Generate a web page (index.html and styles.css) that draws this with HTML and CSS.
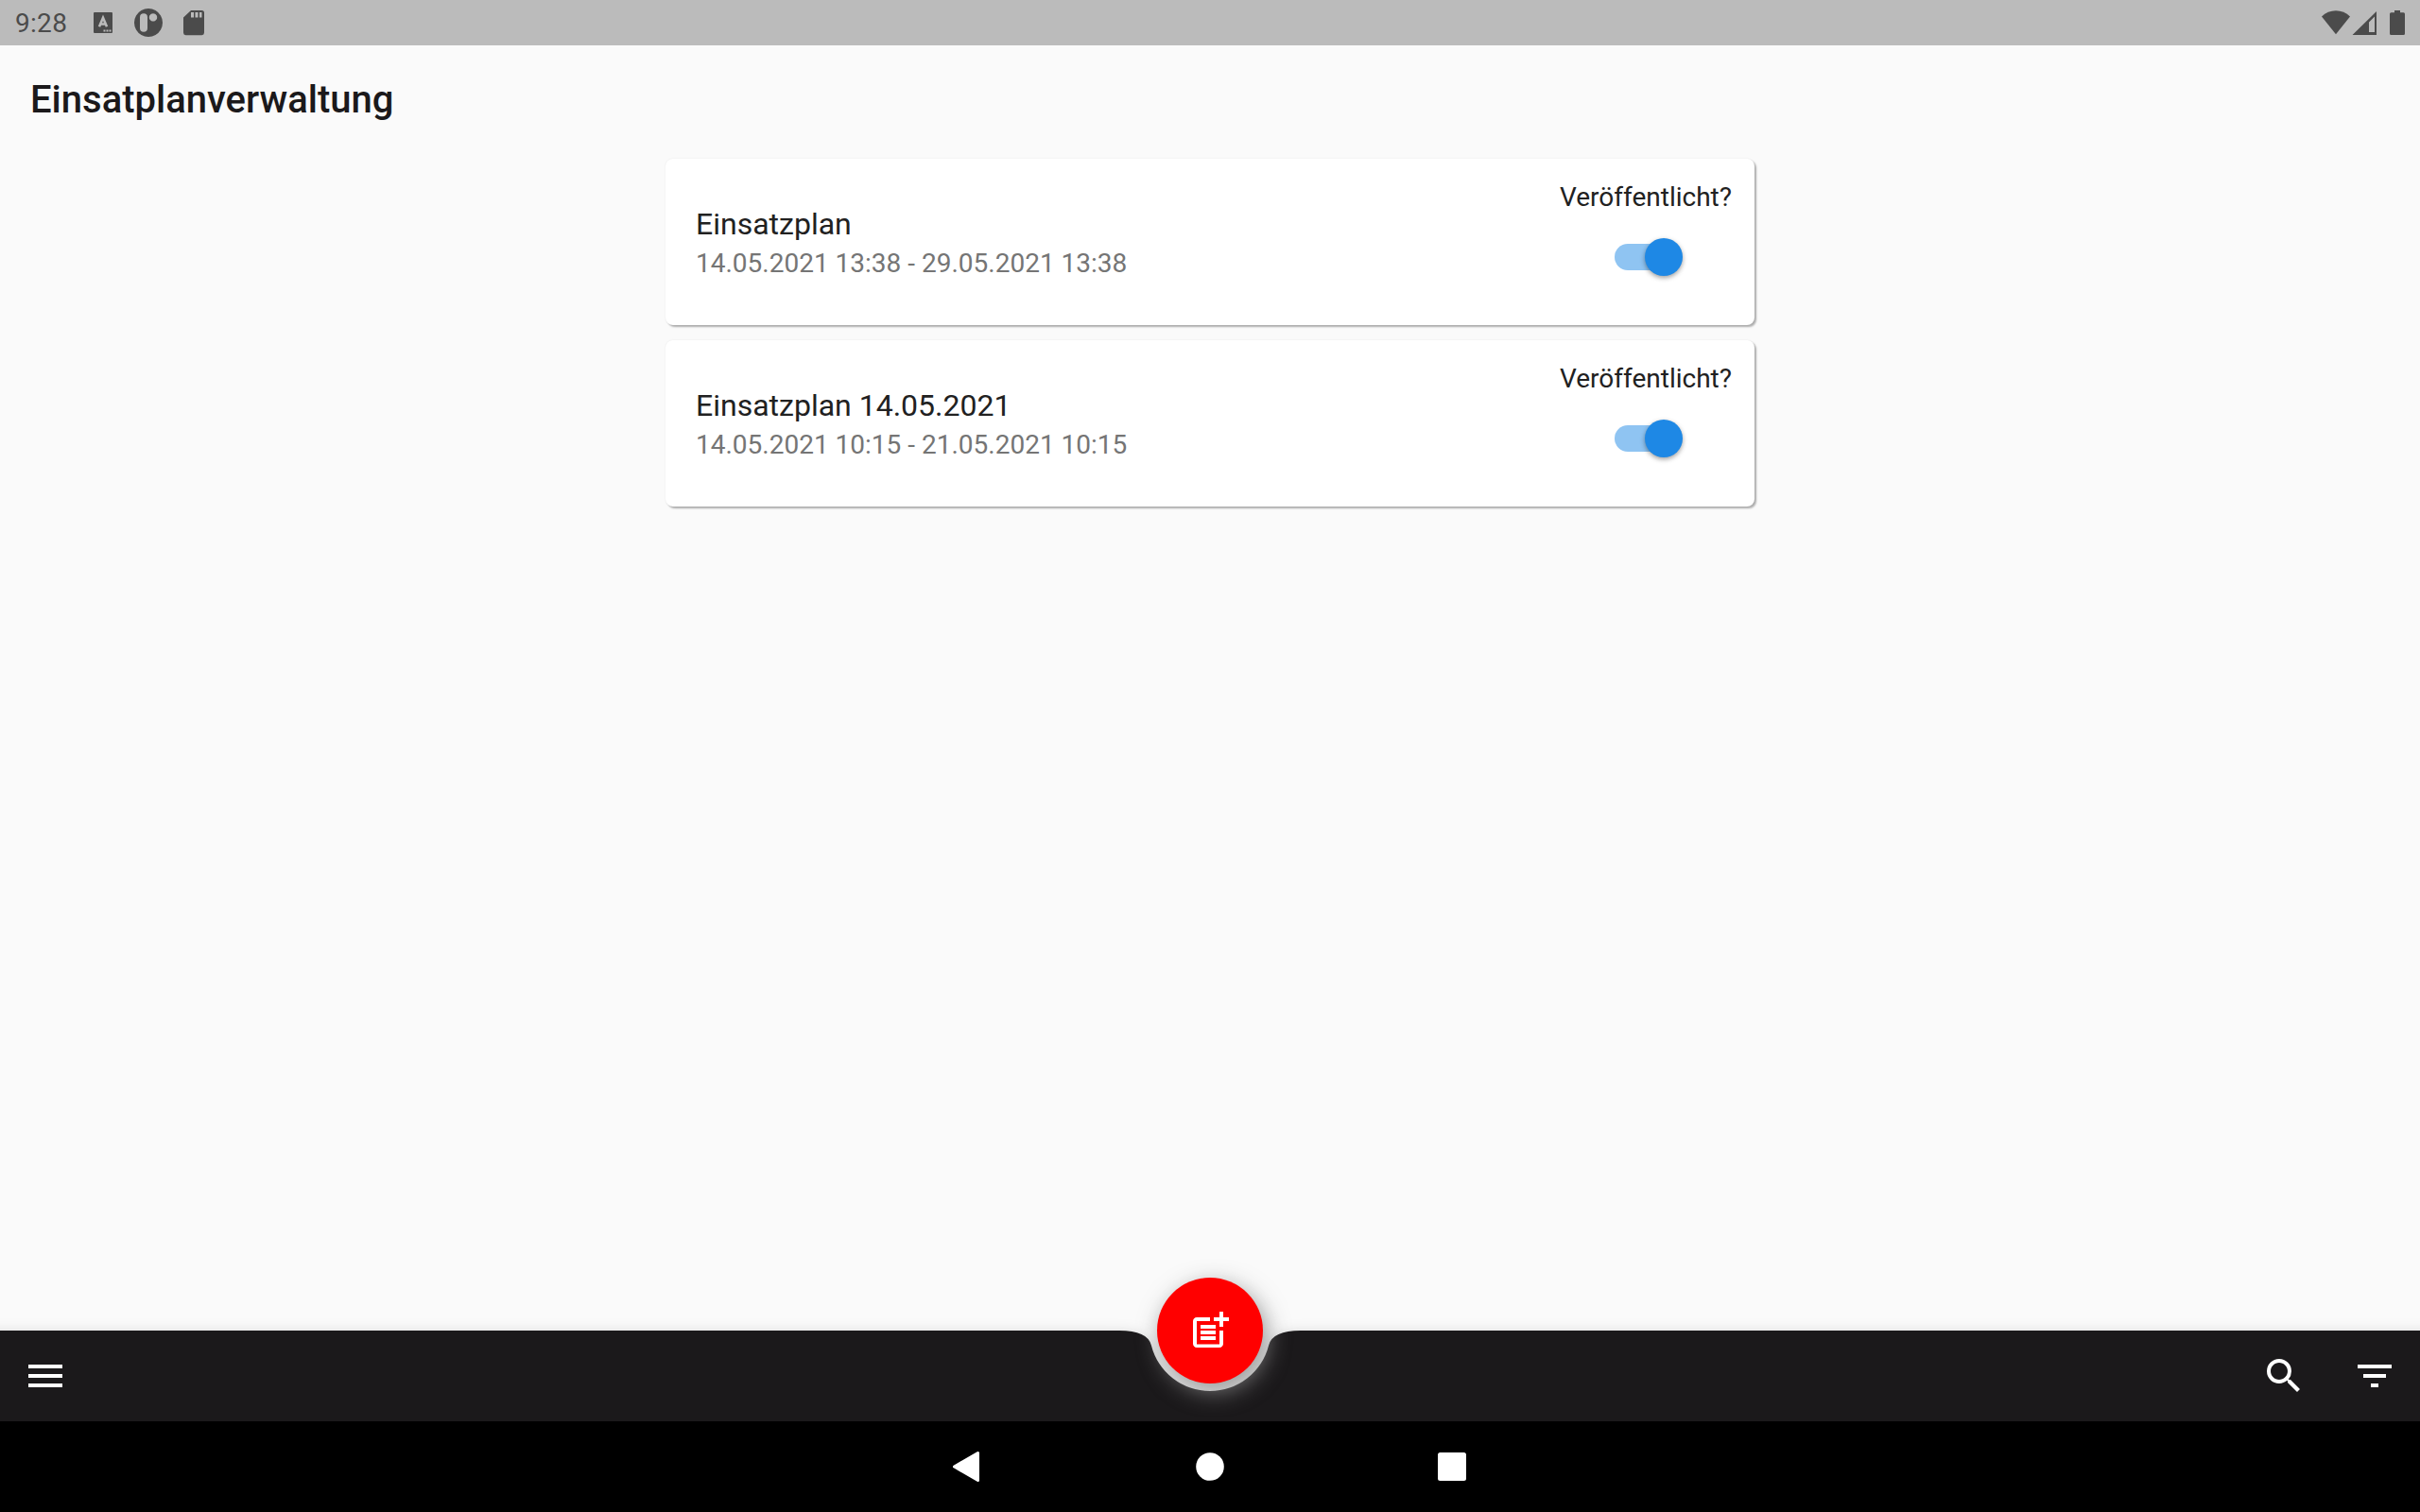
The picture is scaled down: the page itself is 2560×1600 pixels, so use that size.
FILE: index.html
```
<!DOCTYPE html>
<html lang="de">
<head>
<meta charset="utf-8">
<title>Einsatplanverwaltung</title>
<link rel="stylesheet" href="styles.css">
</head>
<body>
<div class="status-bar">
  <span class="clock">9:28</span>
  <svg class="status-icons" width="118" height="48" viewBox="0 0 118 48">
    <path d="M1 13h18q1 0 1 1v20q0 1-1 1H1q-1 0-1-1V14q0-1 1-1z"/>
    <path class="cutout-line" d="M6 28.200L10 18.800L14 28.200M7.500 25.500h5"/>
    <path class="cutout" d="M10.500 31.500v2h2v-2zm3 0v2h2v-2zm3 0v2h2v-2z"/>
    <path fill-rule="evenodd" d="M58 9a15 15 0 1 0 .01 0zM53 14.200a4 4 0 0 1 4 4v11.600a4 4 0 0 1-8 0V18.200a4 4 0 0 1 4-4zM63 14.200a4.200 4.200 0 1 1-.01 0z"/>
    <path fill-rule="evenodd" d="M103 11h11.500a2.500 2.500 0 0 1 2.500 2.500v21a2.800 2.800 0 0 1-2.500 2.800H97.500a2.800 2.800 0 0 1-2.500-2.800V18.500zM103 13v5.500h3V13zm4.500 0v5.500h3V13zm4.500 0v5.500h2.500V13z"/>
  </svg>
  <svg class="signal-icons" width="90" height="48" viewBox="0 0 90 48">
    <path d="M0 17.500C8 9.300 22 9.300 30 17.500L15 36.300z"/>
    <path fill-rule="evenodd" d="M58 12v25H32.500zM56 17.500l-6 6V34h6z"/>
    <path d="M77 11h6v2.300h3.500q1.500 0 1.500 1.500V35.500q0 1.500-1.500 1.500h-13q-1.500 0-1.500-1.500V14.800q0-1.500 1.500-1.500H77z"/>
  </svg>
</div>
<header class="app-bar"><h1>Einsatplanverwaltung</h1></header>
<main class="plans">
  <section class="card">
    <div class="info">
      <div class="name">Einsatzplan</div>
      <div class="period">14.05.2021 13:38 - 29.05.2021 13:38</div>
    </div>
    <div class="publish">
      <span class="label">Veröffentlicht?</span>
      <span class="switch"><span class="thumb"></span></span>
    </div>
  </section>
  <section class="card">
    <div class="info">
      <div class="name">Einsatzplan 14.05.2021</div>
      <div class="period">14.05.2021 10:15 - 21.05.2021 10:15</div>
    </div>
    <div class="publish">
      <span class="label">Veröffentlicht?</span>
      <span class="switch"><span class="thumb"></span></span>
    </div>
  </section>
</main>
<footer class="bottom-bar">
  <svg class="bar-shape" width="2560" height="96" viewBox="0 0 2560 96">
    <path d="M-40 0H1184Q1214 0 1217.940 15.640A64 64 0 0 0 1342.060 15.640Q1346 0 1376 0H2600V96H-40z"/>
  </svg>
  <svg class="icon" width="48" height="48" viewBox="0 0 24 24"><path d="M3 18h18v-2H3v2zm0-5h18v-2H3v2zm0-7v2h18V6H3z"/></svg>
  <div class="actions">
    <svg class="icon" width="48" height="48" viewBox="0 0 24 24"><path d="M15.500 14h-.79l-.28-.27A6.471 6.471 0 0 0 16 9.500 6.500 6.500 0 1 0 9.500 16c1.610 0 3.090-.59 4.230-1.570l.27.28v.79l5 4.990L20.490 19l-4.990-5zm-6 0C7.010 14 5 11.990 5 9.500S7.010 5 9.500 5 14 7.010 14 9.500 11.990 14 9.500 14z"/></svg>
    <svg class="icon" width="48" height="48" viewBox="0 0 24 24"><path d="M10 18h4v-2h-4v2zM3 6v2h18V6H3zm3 7h12v-2H6v2z"/></svg>
  </div>
  <div class="fab">
    <svg class="icon" width="48" height="48" viewBox="0 0 24 24"><path d="M17 19.220H5V7h7V5H5c-1.100 0-2 .9-2 2v12c0 1.100.9 2 2 2h12c1.100 0 2-.9 2-2v-7h-2v7.220z"/><path d="M19 2h-2v3h-3c.01.010 0 2 0 2h3v2.990c.010.010 2 0 2 0V7h3V5h-3V2zM7 9h8v2H7zM7 12v2h8v-2h-3zM7 15h8v2H7z"/></svg>
  </div>
</footer>
<nav class="system-nav">
  <svg width="552" height="96" viewBox="0 0 552 96">
    <path d="M28.500 33.500v29L3.500 48z" stroke="#fff" stroke-width="3" stroke-linejoin="round"/>
    <circle cx="274" cy="48" r="14.800"/>
    <rect x="515" y="33" width="30" height="30" rx="2.500"/>
  </svg>
</nav>
</body>
</html>
```
FILE: styles.css
```
* { box-sizing: border-box; }
body {
  margin: 0;
  width: 2560px;
  height: 1600px;
  display: flex;
  flex-direction: column;
  overflow: hidden;
  background: #fafafa;
  color: #212121;
  font-family: Roboto, sans-serif;
}
svg { display: block; flex: none; }
.status-bar {
  height: 48px;
  flex: none;
  display: flex;
  align-items: center;
  padding: 0 16px;
  background: #bbb;
  color: #4b4b4b;
  fill: #4b4b4b;
}
.cutout { fill: #bbb; }
.cutout-line { fill: none; stroke: #bbb; stroke-width: 2.6; }
.clock { width: 83px; font-size: 28px; line-height: 48px; padding-top: 2px; letter-spacing: 0.3px; }
.signal-icons { margin-left: auto; margin-right: -2px; }
.app-bar { height: 112px; flex: none; padding: 0 32px; }
.app-bar h1 {
  margin: 0;
  font-size: 40px;
  line-height: 116px;
  font-weight: 500;
  color: #1b191b;
}
.plans {
  flex: 1;
  width: 1152px;
  margin: 0 auto;
  padding-top: 8px;
  display: flex;
  flex-direction: column;
  gap: 16px;
}
.card {
  height: 176px;
  display: flex;
  justify-content: space-between;
  padding: 0 24px 0 32px;
  background: #fff;
  border-radius: 8px;
  box-shadow: 2px 2px 2px rgba(0, 0, 0, 0.3), 0 0 2px rgba(0, 0, 0, 0.08);
}
.info { padding-top: 48px; }
.name { font-size: 32px; line-height: 42px; margin-bottom: 2px; }
.period { font-size: 28px; line-height: 38px; color: #757575; }
.publish { display: flex; flex-direction: column; align-items: center; padding-top: 25px; }
.label { font-size: 28px; line-height: 32px; }
.switch {
  width: 66px;
  height: 28px;
  margin-top: 33px;
  border-radius: 14px;
  background: #8fc4f2;
  display: flex;
  align-items: center;
  padding-left: 32px;
}
.thumb {
  flex: none;
  width: 40px;
  height: 40px;
  border-radius: 50%;
  background: #1e88e5;
  box-shadow: 0 2px 4px rgba(0, 0, 0, 0.26), 0 2px 6px rgba(0, 0, 0, 0.14);
}
.bottom-bar {
  position: relative;
  height: 96px;
  flex: none;
  display: flex;
  justify-content: space-between;
  align-items: center;
  padding: 0 24px;
}
.bar-shape {
  position: absolute;
  left: 0;
  top: 0;
  overflow: visible;
  fill: #1b191b;
  filter: drop-shadow(0 4px 8px rgba(0, 0, 0, 0.2));
}
.icon { position: relative; fill: #fff; }
.actions { display: flex; gap: 48px; }
.fab {
  position: absolute;
  left: 1224px;
  top: -56px;
  width: 112px;
  height: 112px;
  border-radius: 50%;
  display: flex;
  align-items: center;
  justify-content: center;
  background: #f00;
  box-shadow: 4px 8px 24px rgba(134, 134, 134, 0.9);
}
.system-nav {
  position: relative;
  height: 96px;
  flex: none;
  display: flex;
  justify-content: center;
  padding-left: 4px;
  background: #000;
  fill: #fff;
}
```
